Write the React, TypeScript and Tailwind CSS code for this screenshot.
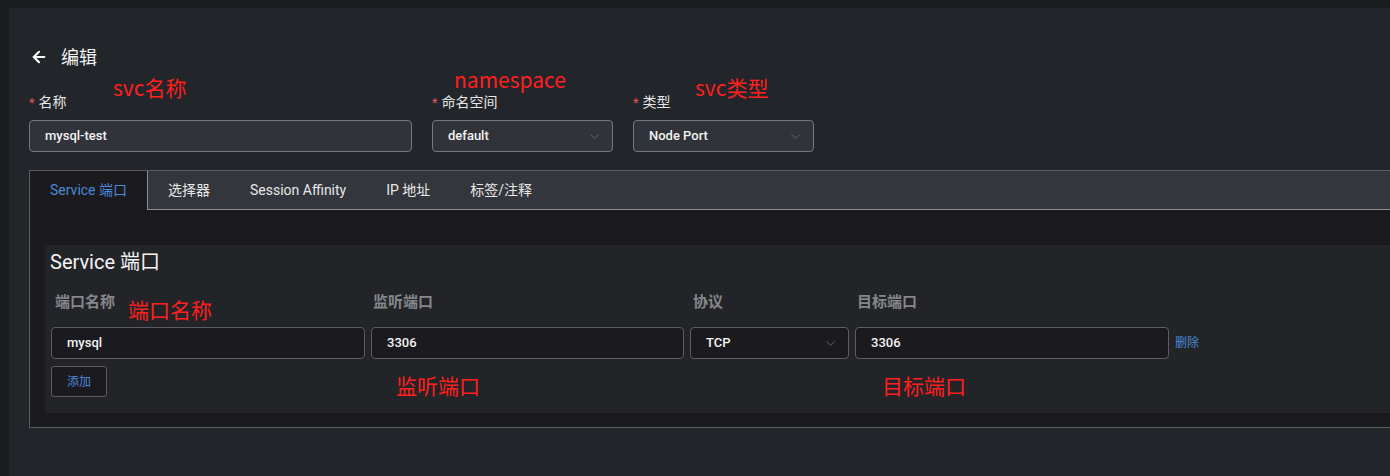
import React from "react";
import { ArrowLeft, ChevronDown } from "lucide-react";

const tabs = ["Service 端口", "选择器", "Session Affinity", "IP 地址", "标签/注释"];

const Label = ({ text }: { text: string }) => (
  <div className="flex items-center h-[18px] mb-[9px] text-[14px] text-[#e6e6e6]">
    <span className="text-[#e0565b] mr-[4px] text-[13px] leading-none">*</span>
    {text}
  </div>
);

const TopInput = ({ value, width, select }: { value: string; width: string; select?: boolean }) => (
  <div
    className={`${width} h-[32px] rounded-[4px] border border-[#75787d] bg-[#303339] flex items-center justify-between pl-[15px] pr-[10px] text-[13px] font-medium text-[#f2f2f2]`}
  >
    <span>{value}</span>
    {select && <ChevronDown size={15} strokeWidth={1.2} className="text-[#74777c]" />}
  </div>
);

const RowInput = ({ value, width, select }: { value: string; width: string; select?: boolean }) => (
  <div
    className={`${width} h-[32px] rounded-[4px] border border-[#5c5d62] bg-[#1b1a1f] flex items-center justify-between pl-[15px] pr-[10px] text-[13px] font-medium text-[#f2f2f2]`}
  >
    <span>{value}</span>
    {select && <ChevronDown size={15} strokeWidth={1.2} className="text-[#74777c]" />}
  </div>
);

const Note = ({ text, pos }: { text: string; pos: string }) => (
  <div className={`absolute ${pos} text-[21px] leading-[21px] text-[#ff1f1f] font-['Noto_Sans_CJK_SC',sans-serif]`}>
    {text}
  </div>
);

export default function App() {
  return (
    <div className="h-[476px] overflow-hidden bg-[#1c1d20] pl-[9px] pt-[8px] font-['Roboto','Noto_Sans_CJK_SC',sans-serif]">
      <div className="relative h-[468px] bg-[#222529] pl-5 pt-[38px]">
        {/* header */}
        <div className="flex items-center h-[22px]">
          <ArrowLeft size={18} strokeWidth={2.8} className="text-white ml-[1px]" />
          <span className="ml-[13px] text-[18px] text-[#f4f4f4]">编辑</span>
        </div>

        {/* base fields */}
        <div className="flex gap-5 mt-[25px]">
          <div>
            <Label text="名称" />
            <TopInput value="mysql-test" width="w-[383px]" />
          </div>
          <div>
            <Label text="命名空间" />
            <TopInput value="default" width="w-[181px]" select />
          </div>
          <div>
            <Label text="类型" />
            <TopInput value="Node Port" width="w-[181px]" select />
          </div>
        </div>

        {/* tabs */}
        <div className="mt-[18px] border border-r-0 border-[#5d5e62] bg-[#1b1a1f]">
          <div className="flex h-[39px] bg-[#33363c]">
            {tabs.map((t, i) =>
              i === 0 ? (
                <div
                  key={t}
                  className="flex items-center px-5 bg-[#1b1a1f] border-r border-[#8c8e92] text-[14px] text-[#4a8ad6]"
                >
                  {t}
                </div>
              ) : (
                <div
                  key={t}
                  className={`flex items-center px-5 border-b border-[#8c8e92] text-[14px] text-[#e8e8e8] ${
                    i === tabs.length - 1 ? "flex-1" : ""
                  }`}
                >
                  {t}
                </div>
              )
            )}
          </div>

          <div className="pl-[15px] pt-[35px] pb-[14px]">
            <div className="bg-[#232428] pl-[5px] pt-[5px] h-[168px]">
              <div className="text-[20px] leading-[24px] text-[#f4f4f4]">Service 端口</div>

              <div className="flex gap-[6px] mt-[19px] text-[15px] font-bold text-[#85878b] h-[18px] items-center">
                <div className="w-[314px] pl-[5px]">端口名称</div>
                <div className="w-[313px] pl-[3px]">监听端口</div>
                <div className="w-[159px] pl-[4px]">协议</div>
                <div className="w-[314px] pl-[3px]">目标端口</div>
              </div>

              <div className="flex gap-[6px] items-center mt-[16px] pl-[1px]">
                <RowInput value="mysql" width="w-[314px]" />
                <RowInput value="3306" width="w-[313px]" />
                <RowInput value="TCP" width="w-[159px]" select />
                <RowInput value="3306" width="w-[314px]" />
                <span className="text-[12px] text-[#4a8ad6]">删除</span>
              </div>

              <div className="mt-[7px] ml-[1px] w-[56px] h-[31px] rounded-[3px] border border-[#5c5d62] bg-[#1b1a1f] flex items-center justify-center text-[12px] text-[#4a8ad6]">
                添加
              </div>
            </div>
          </div>
        </div>

        <Note text="svc名称" pos="left-[104px] top-[69px]" />
        <Note text="namespace" pos="left-[445px] top-[61px]" />
        <Note text="svc类型" pos="left-[686px] top-[69px]" />
        <Note text="端口名称" pos="left-[119px] top-[291px]" />
        <Note text="监听端口" pos="left-[387px] top-[367px]" />
        <Note text="目标端口" pos="left-[873px] top-[367px]" />
      </div>
    </div>
  );
}
